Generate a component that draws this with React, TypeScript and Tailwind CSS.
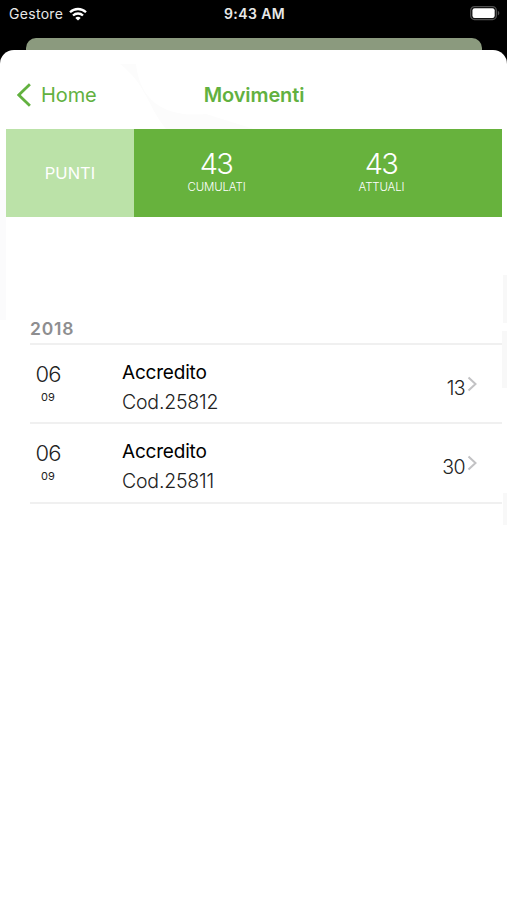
type Movement = { day: string; month: string; title: string; code: string; points: string };

const movements: Movement[] = [
  { day: "06", month: "09", title: "Accredito", code: "Cod.25812", points: "13" },
  { day: "06", month: "09", title: "Accredito", code: "Cod.25811", points: "30" },
];

function StatusBar() {
  return (
    <div className="flex h-[38px] items-start justify-between pl-[9px] pr-[7px] pt-[4px] text-[#e8e8e8]">
      <div className="flex w-[180px] items-center gap-[6px]">
        <span className="text-[14px] leading-[20px] tracking-[0.3px]">Gestore</span>
        <svg width="18" height="14" viewBox="0 0 18 14" fill="none" stroke="#fff" strokeWidth="2.3">
          <path d="M1 5.3C5.5.9 12.5.9 17 5.3" />
          <path d="M4 8.5c2.8-2.7 7.2-2.7 10 0" />
          <path d="M6.3 10.9c1.5-1.4 3.9-1.4 5.4 0L9 13.6z" fill="#fff" stroke="none" />
        </svg>
      </div>
      <span className="text-[14px] font-semibold leading-[20px] tracking-[0.4px]">9:43 AM</span>
      <div className="flex w-[180px] justify-end pt-[1px]">
        <svg width="31" height="16" viewBox="0 0 31 16">
          <rect x="1.7" y="1.7" width="25.6" height="12.8" rx="3.8" fill="none" stroke="#505050" strokeWidth="1.3" />
          <rect x="3.4" y="3.3" width="22.3" height="9.6" rx="2.2" fill="#fff" />
          <path d="M28.8 5.8c2 .8 2 3.9 0 4.7z" fill="#505050" />
        </svg>
      </div>
    </div>
  );
}

function Total({ value, label }: { value: string; label: string }) {
  return (
    <div className="flex w-[165px] flex-col items-center pt-[18px] text-white">
      <span className="pr-px text-[29px] font-light leading-[34px] tracking-[-1.6px]">{value}</span>
      <span className="text-[11.5px] font-light leading-[12px] tracking-[-0.15px]">{label}</span>
    </div>
  );
}

function Row({ m }: { m: Movement }) {
  return (
    <div className="ml-[24px] flex h-[79.4px] border-b-2 border-[#f0f0f0] text-[#222]">
      <div className="flex w-[36px] flex-col items-center pt-[16px]">
        <span className="text-[22px] font-light leading-[26px] tracking-[-0.8px]">{m.day}</span>
        <span className="pt-[2px] text-[11px] leading-[16px]">{m.month}</span>
      </div>
      <div className="ml-[56px] flex flex-1 flex-col pt-[16px]">
        <span className="text-[19px] leading-[24px] tracking-[-0.2px] text-black">{m.title}</span>
        <span className="pt-[5px] text-[19.5px] font-light leading-[25px] tracking-[-0.2px]">{m.code}</span>
      </div>
      <div className="flex items-start gap-[2px] pr-[24px] pt-[30px]">
        <span className="text-[19.5px] font-light leading-[26px] tracking-[-0.6px]">{m.points}</span>
        <svg className="mt-px" width="11" height="16" viewBox="0 0 11 16" fill="none" stroke="#c2c2c4" strokeWidth="2">
          <path d="M1.5 1.5 8.5 8l-7 6.5" />
        </svg>
      </div>
    </div>
  );
}

export default function App() {
  return (
    <div className="h-[900px] w-[507px] overflow-hidden bg-black font-['Inter','Liberation_Sans',sans-serif]">
      <StatusBar />
      <div className="ml-[26px] mr-[25px] h-[12px] rounded-t-[10px] bg-[#8b9a7e]" />
      <div className="relative h-[850px] overflow-hidden rounded-t-[14px] bg-white">
        <svg className="absolute inset-0" width="507" height="850">
          <path d="M120 14h16c4 38 30 54 70 50l48 15h-88C148 57 146 34 120 14z" fill="#fcfcfc" />
          <path d="M0 140h6v130H0z" fill="#fbfbfc" />
          <path d="M503 225h4v48h-4zM502 281h5v57h-5zM503 443h4v32h-4z" fill="#f8f8f8" />
        </svg>
        <div className="relative pl-[6px] pr-[5px]">
          <header className="flex h-[79px] items-center justify-between pl-[11px] pr-[11px] pt-[11px] text-[#62b13f]">
            <div className="flex w-[160px] items-center gap-[9px]">
              <svg width="15" height="24" viewBox="0 0 15 24" fill="none" stroke="currentColor" strokeWidth="2.8">
                <path d="M12.9 1.3 1.8 12l11.1 10.7" />
              </svg>
              <span className="text-[20px] leading-[26px] tracking-[-0.1px]">Home</span>
            </div>
            <h1 className="text-[20px] font-semibold leading-[26px] tracking-[-0.1px]">Movimenti</h1>
            <div className="w-[160px]" />
          </header>
          <section className="flex h-[88px] bg-[#67b23d]">
            <div className="flex w-[128px] items-center justify-center bg-[#bbe2a8] text-[16.5px] text-white">PUNTI</div>
            <Total value="43" label="CUMULATI" />
            <Total value="43" label="ATTUALI" />
          </section>
          <section className="bg-white pt-[100px]">
            <h2 className="ml-[24px] h-[28px] border-b-2 border-[#f0f0f0] text-[17.5px] font-semibold leading-[24px] tracking-[0.8px] text-[#8e8e90]">2018</h2>
            {movements.map((m) => (
              <Row key={m.code} m={m} />
            ))}
          </section>
        </div>
      </div>
    </div>
  );
}
